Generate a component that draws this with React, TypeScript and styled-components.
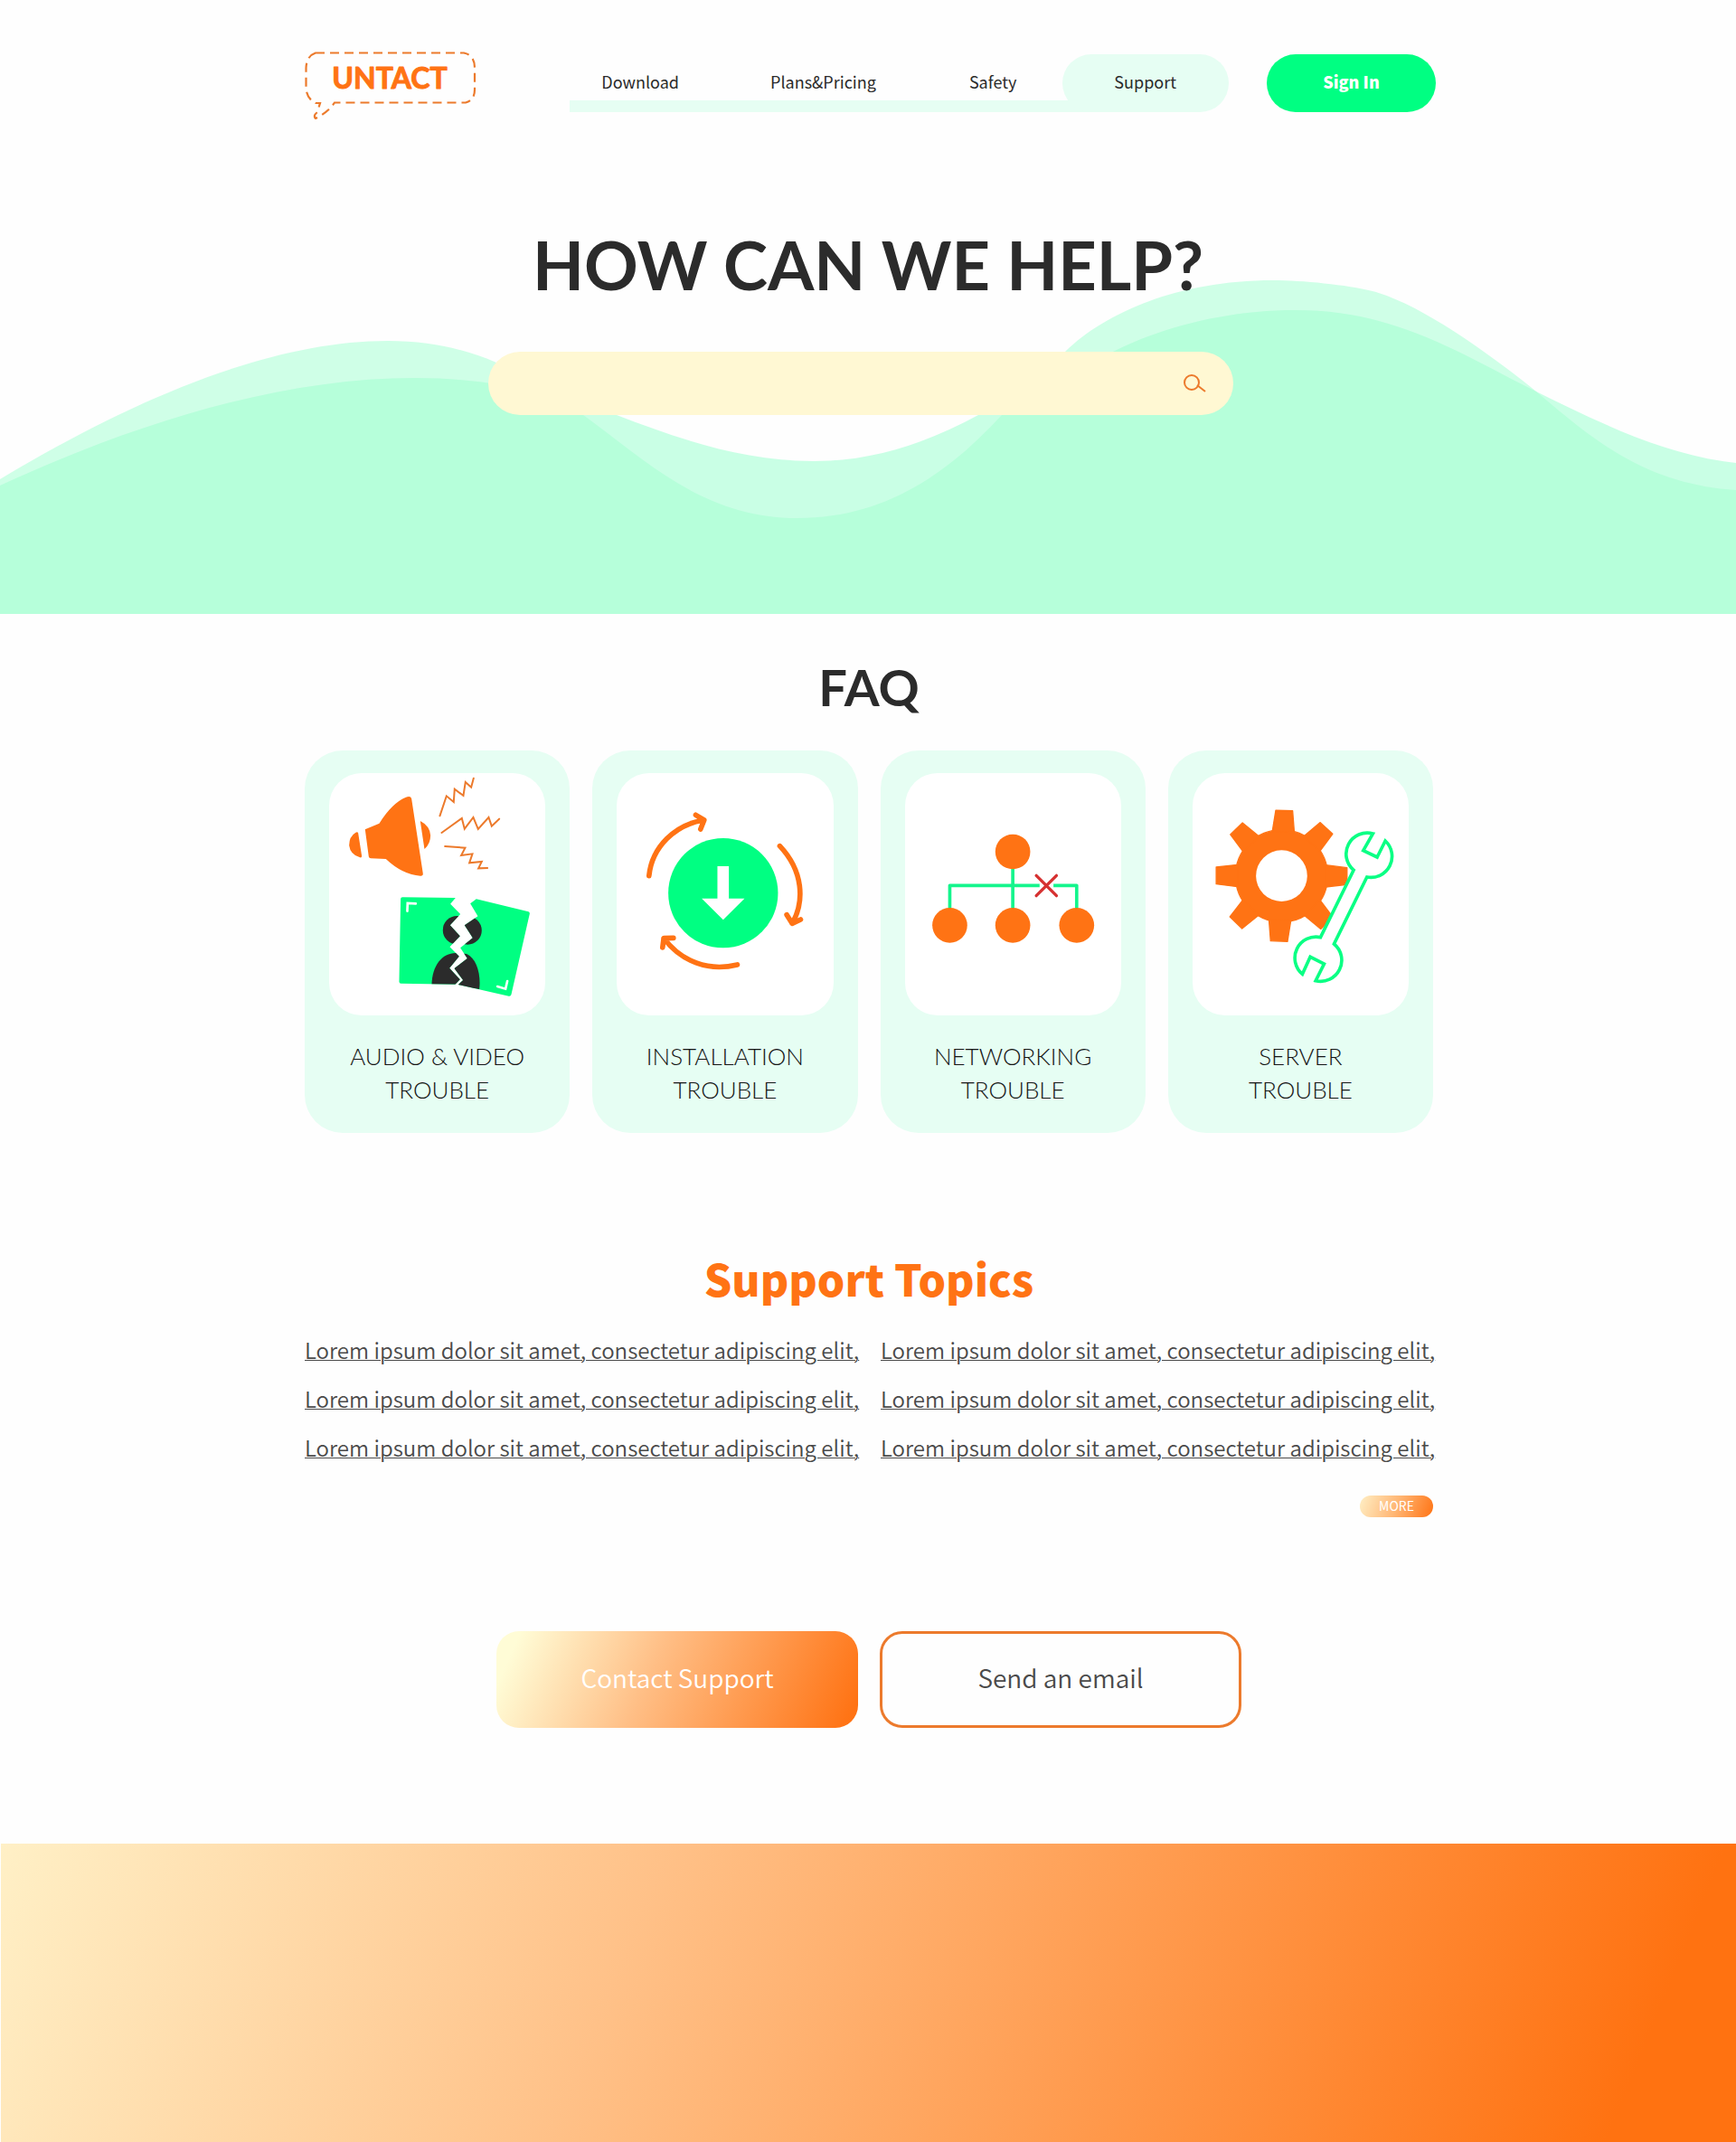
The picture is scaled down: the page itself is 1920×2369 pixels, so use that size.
import React from "react";
import styled, { createGlobalStyle } from "styled-components";

const color = {
  page: "#fefefe",
  ink: "#2b2b2b",
  label: "#151515",
  body: "#4a4a4a",
  mint: "#e6fef3",
  green: "#00ff82",
  orange: "#ff7314",
  line: "#ec7a2c",
  cream: "#fff8d3",
};

const sans = `"Noto Sans CJK KR", "Noto Sans", sans-serif`;
const display = `Lato, "Open Sans", sans-serif`;

const GlobalStyle = createGlobalStyle`
  *, *::before, *::after { box-sizing: border-box; }
  body { margin: 0; background: ${color.page}; color: ${color.ink}; font-family: ${sans}; }
  h1, h2, ul { margin: 0; padding: 0; }
  ul { list-style: none; }
  a { color: inherit; text-decoration: none; }
  button { border: 0; font-family: inherit; cursor: pointer; }
`;

const Header = styled.header`
  display: flex;
  align-items: flex-start;
  max-width: 1256px;
  margin: 0 auto;
  padding: 57px 0 0 5px;
`;

const LogoLink = styled.a`
  display: block;
  height: 75px;
`;

const HeaderRight = styled.div`
  display: flex;
  gap: 42px;
  margin: 3px 0 0 auto;
`;

const NavList = styled.ul`
  display: flex;
  align-items: center;
  height: 64px;
  padding-left: 35px;
  background: linear-gradient(${color.mint}, ${color.mint}) left bottom / calc(100% - 92px) 13px no-repeat;
`;

const NavItem = styled.li<{ $space: number }>`
  margin-right: ${(p) => p.$space}px;
`;

const NavLink = styled.a<{ $active?: boolean }>`
  display: flex;
  align-items: center;
  justify-content: center;
  height: 64px;
  padding: ${(p) => (p.$active ? "0 58px 4px 57px" : "0 0 4px")};
  border-radius: 32px;
  background: ${(p) => (p.$active ? color.mint : "transparent")};
  font-size: 18px;
  line-height: 28px;
`;

const SignIn = styled.button`
  width: 187px;
  height: 64px;
  padding: 0 0 4px;
  border-radius: 32px;
  background: ${color.green};
  color: #fff;
  font-size: 18px;
  font-weight: 900;
  line-height: 28px;
`;

const Hero = styled.section`
  display: grid;
  grid-template-columns: 100%;
`;

const Waves = styled.svg`
  grid-area: 1 / 1;
  align-self: end;
  display: block;
  width: 100%;
  height: 389px;
`;

const HeroContent = styled.div`
  grid-area: 1 / 1;
  z-index: 1;
  display: flex;
  flex-direction: column;
  align-items: center;
  gap: 52px;
  padding: 117px 24px 220px;
`;

const HeroTitle = styled.h1`
  font-family: ${display};
  font-size: 74px;
  font-weight: 700;
  line-height: 88px;
  text-align: center;
`;

const SearchForm = styled.form`
  display: flex;
  align-items: center;
  width: 100%;
  max-width: 824px;
  height: 70px;
  margin-right: 16px;
  padding: 0 25px 0 35px;
  border-radius: 35px;
  background: ${color.cream};
`;

const SearchInput = styled.input`
  flex: 1;
  min-width: 0;
  height: 70px;
  border: 0;
  outline: 0;
  background: transparent;
  color: ${color.ink};
  font-family: inherit;
  font-size: 24px;
`;

const SearchButton = styled.button`
  display: flex;
  padding: 4px;
  background: transparent;
`;

const Section = styled.section`
  max-width: 1250px;
  margin: 0 auto;
  padding-left: 2px;
`;

const FaqTitle = styled.h2`
  padding-top: 47px;
  font-family: ${display};
  font-size: 56px;
  font-weight: 700;
  line-height: 68px;
  text-align: center;
`;

const CardGrid = styled.ul`
  display: grid;
  grid-template-columns: repeat(4, 1fr);
  gap: 25px;
  margin-top: 36px;
`;

const Card = styled.a`
  display: block;
  padding: 25px 27px 29px;
  border-radius: 42px;
  background: ${color.mint};
`;

const Picture = styled.svg`
  display: block;
  width: 100%;
  height: 268px;
  border-radius: 36px;
  background: #fff;
`;

const CardLabel = styled.span`
  display: block;
  margin-top: 27px;
  color: ${color.label};
  font-family: ${display};
  font-size: 26px;
  font-weight: 300;
  line-height: 37px;
  text-align: center;
  white-space: pre-line;
`;

const TopicsTitle = styled.h2`
  padding-top: 130px;
  color: ${color.orange};
  font-size: 48px;
  font-weight: 900;
  line-height: 60px;
  text-align: center;
`;

const TopicGrid = styled.ul`
  display: grid;
  grid-template-columns: repeat(2, minmax(0, 1fr));
  gap: 24px 26px;
  margin-top: 35px;
`;

const TopicLink = styled.a`
  color: ${color.body};
  display: block;
  font-size: 24px;
  font-weight: 350;
  line-height: 30px;
  text-decoration: underline;
  text-decoration-thickness: 1px;
  white-space: nowrap;
`;

const MoreRow = styled.div`
  display: flex;
  justify-content: flex-end;
  margin-top: 38px;
`;

const MoreButton = styled.button`
  width: 81px;
  height: 24px;
  padding: 0 0 2px;
  border-radius: 12px;
  background: linear-gradient(110deg, #ffefc5, #ffb674 50%, ${color.orange});
  color: #fff;
  font-size: 14px;
  line-height: 20px;
`;

const ActionRow = styled.div`
  display: flex;
  justify-content: center;
  gap: 24px;
  margin: 126px 0 128px;
`;

const ActionButton = styled.button<{ $filled?: boolean }>`
  width: 400px;
  height: 107px;
  padding: 0 0 5px;
  border: ${(p) => (p.$filled ? "0" : `3px solid ${color.line}`)};
  border-radius: 25px;
  background: ${(p) =>
    p.$filled ? `linear-gradient(114deg, #fffcd6 6%, #ffbe85 43%, ${color.orange} 97%)` : "transparent"};
  color: ${(p) => (p.$filled ? "#fff" : color.body)};
  font-size: 28px;
  font-weight: 350;
  line-height: 40px;
`;

const Footer = styled.footer`
  height: 330px;
  margin-left: 1px;
  background: linear-gradient(112deg, #fff0c6, #ffc188 36%, #ff7211 93%);
`;

const Logo = () => (
  <svg width="190" height="75" viewBox="0 0 190 75" role="img" aria-label="Untact">
    <path
      d="M12 1.5H176Q188 4 188 18V42Q188 54 178 56.5H33Q26 67 12 74Q9 71 14 67L17 57H12Q2 52 1.5 40V18Q2 5 12 1.5Z"
      fill="none"
      stroke={color.line}
      strokeWidth="2.2"
      strokeDasharray="10 6"
    />
    <text
      x="94"
      y="41"
      textAnchor="middle"
      fontFamily="Lato, sans-serif"
      fontSize="32"
      fontWeight="700"
      fill={color.orange}
      stroke={color.orange}
      strokeWidth="1"
      strokeLinejoin="round"
    >
      UNTACT
    </text>
  </svg>
);

const waveBack =
  "M0 240C150 150 300 87 429 87C530 87 590 130 645 169C710 215 775 283 882 283C980 283 1050 232 1108 169C1135 140 1150 125 1179 98C1220 58 1300 20 1408 20C1440 20 1490 25 1518 32C1570 46 1640 96 1693 138C1750 185 1810 245 1920 252V389H0Z";
const waveFront =
  "M0 247C150 178 310 128 459 128C540 128 610 144 682 169C750 195 820 220 900 220C970 220 1030 197 1082 169C1130 143 1180 122 1233 98C1290 70 1360 53 1433 53C1540 53 1610 98 1693 140C1770 178 1840 213 1920 222V389H0Z";

const AudioVideoPicture = () => {
  const left =
    "M345 517L521 519L504 539L537 573L503 610L536 646L502 682L533 713L501 752L536 790L520 806L340 803Q334 803 334 797L339 522Q339 517 345 517Z";
  const right =
    "M570 538L590 523L763 565Q768 567 767 572L706 840Q704 846 698 845L530 807L546 792L517 753L560 720L537 685L578 652L551 610L595 580Z";
  return (
    <Picture viewBox="102 105 717 804" aria-hidden="true">
      <clipPath id="photo-left">
        <path d={left} />
      </clipPath>
      <clipPath id="photo-right">
        <path d={right} />
      </clipPath>
      <g fill={color.orange}>
        <path d="M221 292L268 272Q310 205 355 186Q372 178 375 190L413 438Q414 447 404 446Q345 442 290 390L240 388Q234 388 233 382Z" />
        <path d="M190 302Q196 298 198 304L210 380Q210 387 204 385Q172 376 168 345Q168 315 190 302Z" />
        <path d="M404 264Q436 280 438 312Q438 340 418 357Z" />
      </g>
      <g fill="none" stroke={color.line} strokeWidth="6" strokeLinecap="round">
        <polyline points="469,247 491,181 515,201 518,158 547,180 554,135 573,152 581,122" />
        <polyline points="475,303 542,255 551,290 580,252 596,291 631,252 641,281 666,257" />
        <polyline points="486,348 553,353 540,378 577,373 567,403 608,399 597,421 627,420" />
      </g>
      <path d={left} fill={color.green} />
      <path d={right} fill={color.green} />
      <g fill={color.ink} clipPath="url(#photo-left)">
        <circle cx="526" cy="626" r="47" />
        <path d="M442 810C442 745 476 702 522 702H560V810Z" />
      </g>
      <g fill={color.ink} clipPath="url(#photo-right)">
        <circle cx="561" cy="627" r="47" />
        <path d="M558 705C590 720 606 770 600 822L500 810V700Z" />
      </g>
      <g fill="none" stroke="#fff" strokeWidth="8" strokeLinecap="round">
        <path d="M361 563L362 537L389 538" />
        <path d="M660 813L687 821L693 795" />
      </g>
    </Picture>
  );
};

const InstallationPicture = () => (
  <Picture viewBox="96 105 717 804" aria-hidden="true">
    <circle cx="449" cy="503" r="182" fill={color.green} />
    <polygon points="430,414 468,414 468,521 520,521 449,592 378,521 430,521" fill="#fff" />
    <g fill="none" stroke={color.orange} strokeWidth="17" strokeLinecap="round" strokeLinejoin="round">
      <path d="M203 446C213 350 290 275 386 261M358 244L386 261L374 291" />
      <path d="M637 347C715 430 720 530 678 604M660 575L678 604L706 591" />
      <path d="M496 741C400 765 310 730 252 653M284 652L252 653L248 684" />
    </g>
  </Picture>
);

const NetworkingPicture = () => (
  <Picture viewBox="105 105 717 804" aria-hidden="true">
    <path
      d="M253 560V478H551M597 478H674V560M462 420V560"
      fill="none"
      stroke="#14f58c"
      strokeWidth="11"
      strokeLinejoin="round"
    />
    <g fill={color.orange}>
      <circle cx="462" cy="366" r="58" />
      <circle cx="253" cy="610" r="58" />
      <circle cx="462" cy="610" r="58" />
      <circle cx="674" cy="610" r="58" />
    </g>
    <path d="M540 445L607 512M607 445L540 512" stroke="#d63131" strokeWidth="10" strokeLinecap="round" />
  </Picture>
);

const ServerPicture = () => (
  <Picture viewBox="114 105 717 804" aria-hidden="true">
    <g fill={color.orange} stroke={color.orange} strokeWidth="4" strokeLinejoin="round">
      <circle cx="409" cy="446" r="153" />
      {[2, 43, 90, 136, 182, 224, 270, 316].map((angle) => (
        <polygon
          key={angle}
          points="373,300 382,229 438,229 446,300"
          transform={`rotate(${angle} 409 446)`}
        />
      ))}
    </g>
    <circle cx="409" cy="446" r="85" fill="#fff" />
    <path
      d="M712 306A70 70 0 0 0 648 427L538 650A70 70 0 0 0 478 772L504 715L550 738L522 794A70 70 0 0 0 583 672L692 450A70 70 0 0 0 753 330L726 384L680 362Z"
      fill="#fff"
      stroke="#0aff84"
      strokeWidth="11"
    />
  </Picture>
);

const navItems = [
  { label: "Download", space: 101 },
  { label: "Plans&Pricing", space: 103 },
  { label: "Safety", space: 51 },
  { label: "Support", space: 0, active: true },
];

const faqCards = [
  { label: "AUDIO & VIDEO\nTROUBLE", Art: AudioVideoPicture },
  { label: "INSTALLATION\nTROUBLE", Art: InstallationPicture },
  { label: "NETWORKING\nTROUBLE", Art: NetworkingPicture },
  { label: "SERVER\nTROUBLE", Art: ServerPicture },
];

const topics = Array.from({ length: 6 }, () => "Lorem ipsum dolor sit amet, consectetur adipiscing elit,");

export default function App() {
  return (
    <>
      <GlobalStyle />
      <Header>
        <LogoLink href="#">
          <Logo />
        </LogoLink>
        <HeaderRight>
          <nav aria-label="Main">
            <NavList>
              {navItems.map((item) => (
                <NavItem key={item.label} $space={item.space}>
                  <NavLink href="#" $active={item.active}>
                    {item.label}
                  </NavLink>
                </NavItem>
              ))}
            </NavList>
          </nav>
          <SignIn type="button">Sign In</SignIn>
        </HeaderRight>
      </Header>
      <main>
        <Hero>
          <Waves viewBox="0 0 1920 389" preserveAspectRatio="none" aria-hidden="true">
            <clipPath id="wave-overlap">
              <path d={waveBack} />
            </clipPath>
            <path d={waveBack} fill="#cfffe7" />
            <path d={waveFront} fill="#c9ffe5" />
            <path d={waveFront} fill="#b6ffda" clipPath="url(#wave-overlap)" />
          </Waves>
          <HeroContent>
            <HeroTitle>HOW CAN WE HELP?</HeroTitle>
            <SearchForm role="search" onSubmit={(e) => e.preventDefault()}>
              <SearchInput type="search" aria-label="Search help" />
              <SearchButton type="submit" aria-label="Search">
                <svg width="26" height="22" viewBox="0 0 26 22" fill="none" stroke={color.line} strokeWidth="2">
                  <circle cx="9" cy="10" r="8" />
                  <path d="M15 13L24 20" />
                </svg>
              </SearchButton>
            </SearchForm>
          </HeroContent>
        </Hero>
        <Section>
          <FaqTitle>FAQ</FaqTitle>
          <CardGrid>
            {faqCards.map(({ label, Art }) => (
              <li key={label}>
                <Card href="#">
                  <Art />
                  <CardLabel>{label}</CardLabel>
                </Card>
              </li>
            ))}
          </CardGrid>
        </Section>
        <Section>
          <TopicsTitle>Support Topics</TopicsTitle>
          <TopicGrid>
            {topics.map((topic, i) => (
              <li key={i}>
                <TopicLink href="#">{topic}</TopicLink>
              </li>
            ))}
          </TopicGrid>
          <MoreRow>
            <MoreButton type="button">MORE</MoreButton>
          </MoreRow>
          <ActionRow>
            <ActionButton type="button" $filled>
              Contact Support
            </ActionButton>
            <ActionButton type="button">Send an email</ActionButton>
          </ActionRow>
        </Section>
      </main>
      <Footer />
    </>
  );
}
